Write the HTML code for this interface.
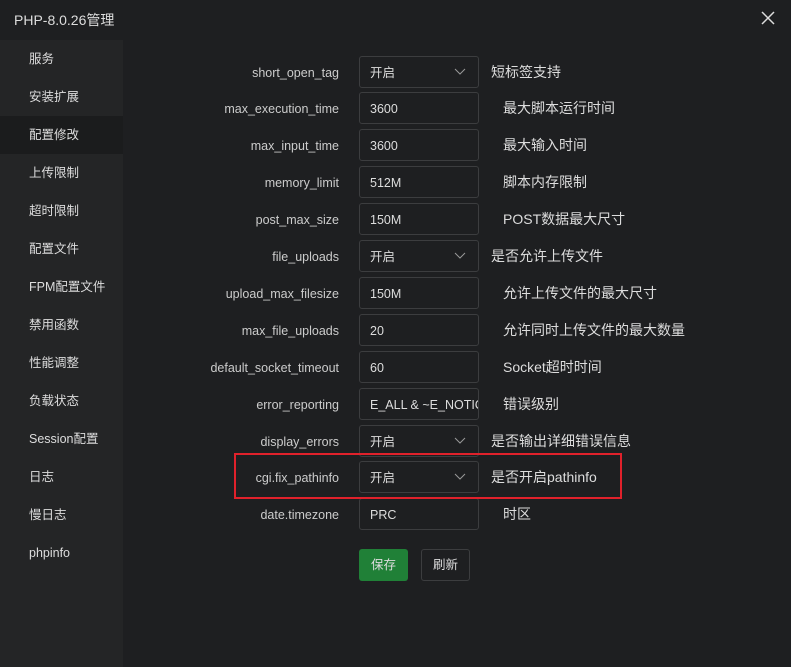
<!DOCTYPE html>
<html><head><meta charset="utf-8"><style>
body{margin:0;width:791px;height:667px;background:#1e1f21;font-family:"Liberation Sans","Noto Sans CJK SC",sans-serif;color:#ccc;position:relative;overflow:hidden;font-size:13px}
.title{position:absolute;left:14px;top:10px;font-size:14px;color:#ddd}
.close{position:absolute;left:761px;top:11px;width:14px;height:14px}
.side{position:absolute;left:0;top:40px;width:123px;height:627px;background:#242526}
.side div{height:38px;line-height:38px;padding-left:29px;font-size:12.5px;color:#ddd}
.side .on{background:#1b1c1d}
.row{position:absolute;left:0;width:791px;height:32px}
.lab{position:absolute;right:452px;top:1px;line-height:32px;font-size:12.5px;color:#ccc;white-space:nowrap}
.box{position:absolute;left:359px;top:0;height:30px;border:1px solid #3c3d3f;border-radius:3px;line-height:32px;padding-left:10px;box-sizing:content-box;width:108px;font-size:12.5px;color:#ddd;overflow:hidden;white-space:nowrap}
.box svg{position:absolute;right:12px;top:11px}
.desc{position:absolute;top:0;line-height:32px;font-size:14px;color:#ddd;white-space:nowrap}
.btn{position:absolute;top:549px;height:32px;line-height:33px;width:49px;text-align:center;border-radius:3px;font-size:12.5px;color:#ddd}
</style></head><body>
<div class="title">PHP-8.0.26管理</div>
<svg class="close" viewBox="0 0 14 14"><path d="M1 1L13 13M13 1L1 13" stroke="#ddd" stroke-width="1.5"/></svg>
<div class="side">
<div>服务</div><div>安装扩展</div><div class="on">配置修改</div><div>上传限制</div><div>超时限制</div><div>配置文件</div><div>FPM配置文件</div><div>禁用函数</div><div>性能调整</div><div>负载状态</div><div>Session配置</div><div>日志</div><div>慢日志</div><div>phpinfo</div>
</div>
<div class="row" style="top:56px"><span class="lab">short_open_tag</span><div class="box">开启<svg width="12" height="8" viewBox="0 0 12 8"><path d="M1 1L6 6L11 1" stroke="#999" fill="none"/></svg></div><span class="desc" style="left:491px">短标签支持</span></div>
<div class="row" style="top:92px"><span class="lab">max_execution_time</span><div class="box">3600</div><span class="desc" style="left:503px">最大脚本运行时间</span></div>
<div class="row" style="top:129px"><span class="lab">max_input_time</span><div class="box">3600</div><span class="desc" style="left:503px">最大输入时间</span></div>
<div class="row" style="top:166px"><span class="lab">memory_limit</span><div class="box">512M</div><span class="desc" style="left:503px">脚本内存限制</span></div>
<div class="row" style="top:203px"><span class="lab">post_max_size</span><div class="box">150M</div><span class="desc" style="left:503px">POST数据最大尺寸</span></div>
<div class="row" style="top:240px"><span class="lab">file_uploads</span><div class="box">开启<svg width="12" height="8" viewBox="0 0 12 8"><path d="M1 1L6 6L11 1" stroke="#999" fill="none"/></svg></div><span class="desc" style="left:491px">是否允许上传文件</span></div>
<div class="row" style="top:277px"><span class="lab">upload_max_filesize</span><div class="box">150M</div><span class="desc" style="left:503px">允许上传文件的最大尺寸</span></div>
<div class="row" style="top:314px"><span class="lab">max_file_uploads</span><div class="box">20</div><span class="desc" style="left:503px">允许同时上传文件的最大数量</span></div>
<div class="row" style="top:351px"><span class="lab">default_socket_timeout</span><div class="box">60</div><span class="desc" style="left:503px">Socket超时时间</span></div>
<div class="row" style="top:388px"><span class="lab">error_reporting</span><div class="box">E_ALL &amp; ~E_NOTICE</div><span class="desc" style="left:503px">错误级别</span></div>
<div class="row" style="top:425px"><span class="lab">display_errors</span><div class="box">开启<svg width="12" height="8" viewBox="0 0 12 8"><path d="M1 1L6 6L11 1" stroke="#999" fill="none"/></svg></div><span class="desc" style="left:491px">是否输出详细错误信息</span></div>
<div class="row" style="top:461px"><span class="lab">cgi.fix_pathinfo</span><div class="box">开启<svg width="12" height="8" viewBox="0 0 12 8"><path d="M1 1L6 6L11 1" stroke="#999" fill="none"/></svg></div><span class="desc" style="left:491px">是否开启pathinfo</span></div>
<div class="row" style="top:498px"><span class="lab">date.timezone</span><div class="box">PRC</div><span class="desc" style="left:503px">时区</span></div>
<div style="position:absolute;left:234px;top:453px;width:384px;height:42px;border:2px solid #e0212b"></div>
<div class="btn" style="left:359px;background:#208037">保存</div>
<div class="btn" style="left:421px;border:1px solid #3c3d3f;height:30px;line-height:31px;width:47px">刷新</div>
</body></html>
